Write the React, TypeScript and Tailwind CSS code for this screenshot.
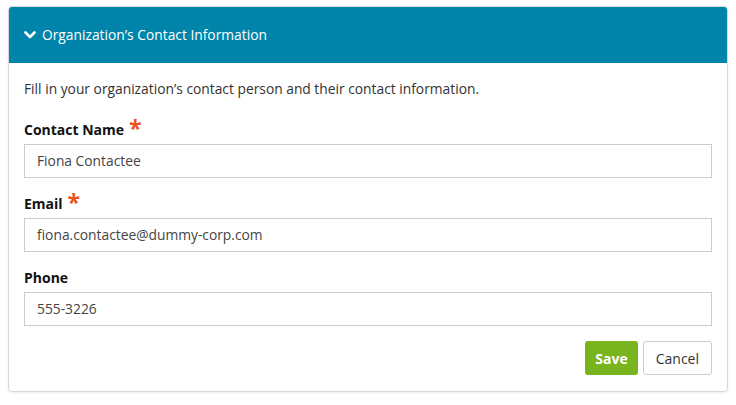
import React from 'react'

type Field = {
    label: string;
    value: string;
    required: boolean;
};

const fields: Field[] = [
    { label: 'Contact Name', value: 'Fiona Contactee', required: true },
    { label: 'Email', value: 'fiona.contactee@dummy-corp.com', required: true },
    { label: 'Phone', value: '555-3226', required: false },
];

export default function App() {
    return (
        <div className="bg-white w-[736px] h-[405px] pt-[6px] px-[8px]" style={{ fontFamily: '"Open Sans", "Noto Sans", sans-serif' }}>
            <div className="w-[720px] border border-[#d8d8d8] rounded-[4px] shadow-[0_1px_2px_rgba(0,0,0,0.08)] overflow-hidden">
                <div className="h-[56px] bg-[#0084a9] flex items-center pl-[15px] text-white text-[13.8px]">
                    <svg width="12" height="12" viewBox="0 0 12 12" className="mr-[6px]">
                        <path d="M1.5 3.5 L6 8 L10.5 3.5" fill="none" stroke="white" strokeWidth="2.6" strokeLinecap="round" strokeLinejoin="round" />
                    </svg>
                    <span>Organization’s Contact Information</span>
                </div>
                <div className="px-[15px] pt-[16px] pb-[16px] text-[#333]">
                    <p className="text-[13.8px] leading-[20px] mb-[20px]">Fill in your organization’s contact person and their contact information.</p>
                    {fields.map((field, index) => (
                        <div key={index} className="mb-[15px]">
                            <label className="flex items-center h-[20px] mb-[5px] text-[14px] font-bold text-[#111]">
                                {field.label}
                                {field.required && <span className="ml-[5px] text-[#e8541c] text-[23px] font-bold leading-none -mt-[2px]">*</span>}
                            </label>
                            <div className="h-[34px] border border-[#cccccc] flex items-center px-[12px] text-[13.8px] text-[#444]">
                                {field.value}
                            </div>
                        </div>
                    ))}
                    <div className="flex justify-end gap-[5px]">
                        <button className="h-[34px] px-[10px] rounded-[3px] bg-[#78b41e] text-white text-[14px] font-bold">Save</button>
                        <button className="h-[34px] px-[12px] rounded-[3px] border border-[#cccccc] bg-white text-[#333] text-[14px]">Cancel</button>
                    </div>
                </div>
            </div>
        </div>
    )
}
